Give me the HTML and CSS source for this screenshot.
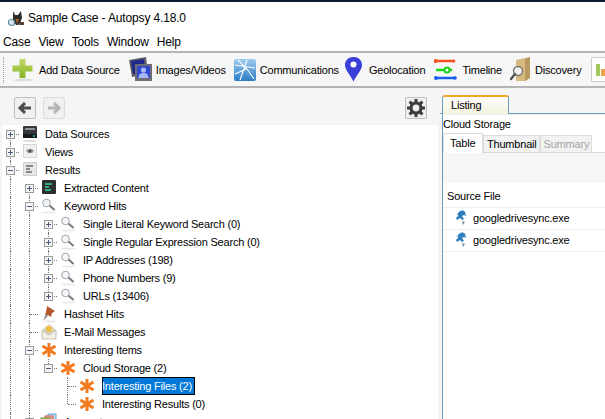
FILE: index.html
```html
<!DOCTYPE html>
<html lang="en">
<head>
    <meta charset="UTF-8">
    <title>Sample Case - Autopsy 4.18.0</title>
    <link rel="stylesheet" href="styles.css">
</head>
<body>
    <svg class="defs" width="0" height="0">
        <symbol id="i-glass" viewBox="0 0 18 18">
            <ellipse cx="9" cy="15.500" rx="7" ry="1" fill="#e9e9e9"/>
            <path d="M9.500 8.500l4.500 4" stroke="#7a7a7a" stroke-width="2" stroke-linecap="round"/>
            <circle cx="6.500" cy="6" r="3.800" fill="#f3f7fa" stroke="#a0a4a8"/>
        </symbol>
        <symbol id="i-star" viewBox="0 0 18 18">
            <path d="M9 2v14M2.500 5l13 8M15.500 5l-13 8" stroke="#f47a20" stroke-width="3"/>
        </symbol>
        <symbol id="i-exe" viewBox="0 0 14 16">
            <path d="M5 2c2-2 5-2 6 0l1 4-2-1-2 1 2 3-2 1-2-2-3 2-1-2 2-2 0-2-2 1z" fill="#2f7fc0"/>
            <path d="M8 11l3 1-2 3z" fill="#7a8fa0"/>
        </symbol>
    </svg>

    <header class="titlebar">
        <svg class="app-logo" width="20" height="20" viewBox="0 0 20 20">
            <path d="M6 3l2 4h3l3-4 1 7-2 5-2 2H9l-3-5z" fill="#2e2a28"/>
            <path d="M8.500 11l1.500 5 2-5z" fill="#a8662c"/>
            <circle cx="4.500" cy="14.500" r="3" fill="#dfeaf0" stroke="#5d8ca8" stroke-width="1.200"/>
            <path d="M13 14h4v3h-5z" fill="#5a4030"/>
        </svg>
        <span>Sample Case - Autopsy 4.18.0</span>
    </header>

    <nav class="menubar">
        <span>Case</span><span>View</span><span>Tools</span><span>Window</span><span>Help</span>
    </nav>

    <div class="toolbar">
        <div class="grip"></div>
        <div class="tool tool-add">
            <svg width="22" height="24" viewBox="0 0 22 24">
                <defs><linearGradient id="g-plus" x1="0" y1="0" x2="0" y2="1"><stop offset="0" stop-color="#c2dc63"/><stop offset="1" stop-color="#86b32b"/></linearGradient></defs>
                <ellipse cx="11" cy="22" rx="10" ry="1.200" fill="#dcdcd6"/>
                <path d="M7.500 1h6v6.500h7v6h-7v6.500h-6v-6.500h-7v-6h7z" fill="url(#g-plus)"/>
            </svg>
            <span>Add Data Source</span>
        </div>
        <div class="tool tool-images">
            <svg width="25" height="25" viewBox="0 0 25 25">
                <path d="M1 3l17-3 2 17-16 3z" fill="#5c5c66"/>
                <path d="M3 4l13-2 1 13-12 2z" fill="#1d2a8c"/>
                <path d="M7 7h17v17H7z" fill="#6c6c72"/>
                <path d="M9 9h13v12H9z" fill="#2f47cc"/>
                <circle cx="15.500" cy="13" r="2.600" fill="#a7b6f4"/>
                <path d="M10.500 21c0-4 2.500-5 5-5s5 1 5 5z" fill="#a7b6f4"/>
            </svg>
            <span>Images/Videos</span>
        </div>
        <div class="tool tool-comm">
            <svg width="22" height="22" viewBox="0 0 22 22">
                <defs><linearGradient id="g-comm" x1="0" y1="0" x2="0" y2="1"><stop offset="0" stop-color="#9fcdf0"/><stop offset="1" stop-color="#2b7cc6"/></linearGradient></defs>
                <rect width="22" height="22" rx="2" fill="url(#g-comm)"/>
                <path d="M1 6l20 3M13 1L6 21M4 1l9 9 7 10M1 15l11-5" stroke="#fff" stroke-width="1.100" fill="none"/>
            </svg>
            <span>Communications</span>
        </div>
        <div class="tool tool-geo">
            <svg width="17" height="25" viewBox="0 0 17 25">
                <path d="M8.500 0C3.500 0 0 3.500 0 8c0 5 5.500 10 8.500 16.500C11.500 18 17 13 17 8c0-4.500-3.500-8-8.500-8z" fill="#3a3fd8"/>
                <circle cx="8.500" cy="7.500" r="3" fill="#fff"/>
            </svg>
            <span>Geolocation</span>
        </div>
        <div class="tool tool-time">
            <svg width="23" height="24" viewBox="0 0 23 24">
                <path d="M1 3h19" stroke="#f4511e" stroke-width="2.500" stroke-linecap="round"/>
                <circle cx="1.500" cy="3" r="2" fill="#f4511e"/><circle cx="19.500" cy="3" r="1.500" fill="#f4511e"/>
                <path d="M2 12h16" stroke="#18d418" stroke-width="2.500"/>
                <circle cx="13" cy="12" r="2.500" fill="#fff" stroke="#18d418" stroke-width="2"/>
                <path d="M2 20h19" stroke="#1a5cf0" stroke-width="2.500" stroke-linecap="round"/>
                <circle cx="2" cy="20" r="2" fill="#1a5cf0"/><circle cx="21" cy="20" r="1.800" fill="#1a5cf0"/>
            </svg>
            <span>Timeline</span>
        </div>
        <div class="tool tool-disc">
            <svg width="21" height="25" viewBox="0 0 21 25">
                <path d="M6 3l14-3v21l-5 3H6z" fill="#d7ba82"/>
                <path d="M15 2l5-2v21l-5 3z" fill="#b99a60"/>
                <circle cx="8" cy="14" r="4.500" fill="#f2f2ee" stroke="#77756e" stroke-width="1.400"/>
                <path d="M5 17l-4 5" stroke="#55534e" stroke-width="2.400" stroke-linecap="round"/>
            </svg>
            <span>Discovery</span>
        </div>
        <div class="tool-chart">
            <svg width="13" height="14" viewBox="0 0 13 14">
                <rect x="1" y="1" width="4" height="12" fill="#a5c85a"/>
                <rect x="6" y="6" width="4" height="7" fill="#eda24a"/>
                <rect x="11" y="8" width="2" height="5" fill="#62b4e0"/>
            </svg>
        </div>
    </div>

    <main class="workspace">
        <section class="left-pane">
            <div class="nav-row">
                <button class="nav-btn"><svg width="16" height="14" viewBox="0 0 16 14"><path d="M14 7H4M8 2L3 7l5 5" fill="none" stroke="#4a4a4a" stroke-width="3"/></svg></button>
                <button class="nav-btn nav-off"><svg width="16" height="14" viewBox="0 0 16 14"><path d="M2 7h10M8 2l5 5-5 5" fill="none" stroke="#b4b4b4" stroke-width="3"/></svg></button>
                <button class="nav-btn nav-gear"><svg width="18" height="18" viewBox="0 0 18 18"><circle cx="9" cy="9" r="5" fill="none" stroke="#3c3c3c" stroke-width="3.200"/><path d="M9 0v4M9 14v4M0 9h4M14 9h4M2.600 2.600l2.800 2.800M12.600 12.600l2.800 2.800M15.400 2.600l-2.800 2.800M5.400 12.600l-2.800 2.800" stroke="#3c3c3c" stroke-width="3"/></svg></button>
            </div>
            <div class="tree">
                <div class="row">
                    <i class="tog plus line-down"></i>
                    <svg class="ico" viewBox="0 0 18 18"><rect x="2" y="1" width="14" height="12" rx="1" fill="#33363a"/><rect x="4" y="3" width="10" height="2" fill="#8d9297"/><rect x="2" y="9" width="14" height="4" fill="#16191c"/><circle cx="13" cy="11" r="1" fill="#31c0d0"/><ellipse cx="9" cy="16" rx="7" ry="1" fill="#ddd"/></svg>
                    <span class="lbl">Data Sources</span>
                </div>
                <div class="row">
                    <i class="tog plus line-both"></i>
                    <svg class="ico" viewBox="0 0 18 18"><rect x="2.500" y="1.500" width="13" height="13" fill="#f1f1f1" stroke="#d6d6d6"/><path d="M5 8c2-3 6-3 8 0-2 3-6 3-8 0z" fill="#9aa09a"/><circle cx="9" cy="8" r="1.500" fill="#3f4a44"/></svg>
                    <span class="lbl">Views</span>
                </div>
                <div class="row">
                    <i class="tog minus line-both"></i>
                    <svg class="ico" viewBox="0 0 18 18"><rect x="2.500" y="1.500" width="13" height="13" fill="#e6e6e6" stroke="#cfcfcf"/><path d="M5 5h7M5 8h4M5 11h6" stroke="#6a6a6a" stroke-width="1.300"/></svg>
                    <span class="lbl">Results</span>
                </div>

                <div class="row">
                    <i class="col line"></i><i class="tog plus line-down"></i>
                    <svg class="ico" viewBox="0 0 18 18"><rect x="2" y="1" width="14" height="14" rx="1" fill="#2d2f30"/><path d="M5 5h7M5 8h4M5 11h6" stroke="#38d69a" stroke-width="1.300"/></svg>
                    <span class="lbl">Extracted Content</span>
                </div>
                <div class="row">
                    <i class="col line"></i><i class="tog minus line-both"></i>
                    <svg class="ico"><use href="#i-glass"/></svg>
                    <span class="lbl">Keyword Hits</span>
                </div>
                <div class="row">
                    <i class="col line"></i><i class="col line"></i><i class="tog plus line-down"></i>
                    <svg class="ico"><use href="#i-glass"/></svg>
                    <span class="lbl">Single Literal Keyword Search (0)</span>
                </div>
                <div class="row">
                    <i class="col line"></i><i class="col line"></i><i class="tog plus line-both"></i>
                    <svg class="ico"><use href="#i-glass"/></svg>
                    <span class="lbl">Single Regular Expression Search (0)</span>
                </div>
                <div class="row">
                    <i class="col line"></i><i class="col line"></i><i class="tog plus line-both"></i>
                    <svg class="ico"><use href="#i-glass"/></svg>
                    <span class="lbl">IP Addresses (198)</span>
                </div>
                <div class="row">
                    <i class="col line"></i><i class="col line"></i><i class="tog plus line-both"></i>
                    <svg class="ico"><use href="#i-glass"/></svg>
                    <span class="lbl">Phone Numbers (9)</span>
                </div>
                <div class="row">
                    <i class="col line"></i><i class="col line"></i><i class="tog plus line-up"></i>
                    <svg class="ico"><use href="#i-glass"/></svg>
                    <span class="lbl">URLs (13406)</span>
                </div>
                <div class="row">
                    <i class="col line"></i><i class="tog leaf line-both"></i>
                    <svg class="ico" viewBox="0 0 18 18"><path d="M7 1l8 5-3 2-1 4-3-2-3 0 1-3z" fill="#b5562c"/><path d="M6 9l-3 7 5-5" fill="#8a8a8a"/><ellipse cx="10" cy="16.500" rx="6" ry="1" fill="#e4e4e4"/></svg>
                    <span class="lbl">Hashset Hits</span>
                </div>
                <div class="row">
                    <i class="col line"></i><i class="tog leaf line-both"></i>
                    <svg class="ico" viewBox="0 0 18 18"><path d="M3 6l6-5 6 5v9H3z" fill="#d8d3c0"/><path d="M2 7l7 5 7-5v9H2z" fill="#f3efe2" stroke="#b9b4a4" stroke-width=".8"/><circle cx="9" cy="6" r="3" fill="#efbe3c"/></svg>
                    <span class="lbl">E-Mail Messages</span>
                </div>
                <div class="row">
                    <i class="col line"></i><i class="tog minus line-both"></i>
                    <svg class="ico"><use href="#i-star"/></svg>
                    <span class="lbl">Interesting Items</span>
                </div>
                <div class="row">
                    <i class="col line"></i><i class="col line"></i><i class="tog minus line-up"></i>
                    <svg class="ico"><use href="#i-star"/></svg>
                    <span class="lbl">Cloud Storage (2)</span>
                </div>
                <div class="row">
                    <i class="col line"></i><i class="col line"></i><i class="col"></i><i class="tog leaf line-both"></i>
                    <svg class="ico"><use href="#i-star"/></svg>
                    <span class="lbl selected">Interesting Files (2)</span>
                </div>
                <div class="row">
                    <i class="col line"></i><i class="col line"></i><i class="col"></i><i class="tog leaf line-up"></i>
                    <svg class="ico"><use href="#i-star"/></svg>
                    <span class="lbl">Interesting Results (0)</span>
                </div>
                <div class="row">
                    <i class="col line"></i><i class="tog plus line-up"></i>
                    <svg class="ico" viewBox="0 0 18 18"><rect x="8" y="1" width="8" height="9" fill="#bfe0f2" stroke="#5aa8d8"/><rect x="5" y="3" width="8" height="9" fill="#f0a8a0" stroke="#d8584c"/><rect x="1" y="5" width="9" height="9" fill="#a6d070" stroke="#5f9e32"/></svg>
                    <span class="lbl">Accounts</span>
                </div>
            </div>
        </section>

        <section class="right-pane">
            <div class="top-tabs">
                <div class="top-tab">Listing</div>
            </div>
            <div class="listing">
                <div class="listing-title">Cloud Storage</div>
                <div class="sub-tabs">
                    <div class="sub-tab active">Table</div>
                    <div class="sub-tab">Thumbnail</div>
                    <div class="sub-tab disabled">Summary</div>
                </div>
                <div class="strip"></div>
                <div class="table-head">Source File</div>
                <div class="table-row"><svg class="exe"><use href="#i-exe"/></svg>googledrivesync.exe</div>
                <div class="table-row"><svg class="exe"><use href="#i-exe"/></svg>googledrivesync.exe</div>
            </div>
        </section>
    </main>
</body>
</html>
```

FILE: styles.css
```css
html, body {
    margin: 0;
    height: 100%;
}
body {
    width: 605px;
    height: 419px;
    overflow: hidden;
    display: flex;
    flex-direction: column;
    font-family: "Liberation Sans", Arial, sans-serif;
    font-size: 11px;
    letter-spacing: -0.2px;
    color: #000;
    background-color: #fff;
    border-top: 2px solid #0b1a2e;
    box-sizing: border-box;
}
.defs {
    position: absolute;
}

/* Title and menu */
.titlebar {
    height: 31px;
    flex: none;
    display: flex;
    align-items: center;
    gap: 1px;
    padding-left: 7px;
    font-size: 12px;
    letter-spacing: -0.15px;
}
.menubar {
    height: 18px;
    flex: none;
    display: flex;
    align-items: center;
    gap: 8px;
    padding-left: 3px;
    font-size: 12px;
    letter-spacing: -0.15px;
}

/* Toolbar */
.toolbar {
    height: 37px;
    flex: none;
    display: flex;
    align-items: center;
    box-sizing: border-box;
    background-color: #f6f6f6;
    border-top: 2px solid #b4b4b4;
    border-bottom: 2px solid #b4b4b4;
    overflow: hidden;
}
.grip {
    width: 0;
    height: 26px;
    margin-left: 3px;
    border-left: 1px dotted #9a9a9a;
}
.tool {
    display: flex;
    align-items: center;
    flex: none;
}
.tool-add { margin-left: 8px; gap: 5px; }
.tool-images { margin-left: 8px; gap: 3px; }
.tool-comm { margin-left: 8px; gap: 4px; }
.tool-geo { margin-left: 6px; gap: 7px; }
.tool-time { margin-left: 9px; gap: 5px; }
.tool-disc { margin-left: 8px; gap: 4px; }
.tool-chart {
    flex: none;
    margin-left: 10px;
    width: 20px;
    height: 25px;
    display: flex;
    align-items: center;
    padding-left: 3px;
    box-sizing: border-box;
    background-color: #fff;
    border: 1px solid #ccc;
}

/* Workspace */
.workspace {
    flex: 1;
    min-height: 0;
    display: flex;
    background-color: #f5f5f5;
}
.left-pane {
    width: 440px;
    flex: none;
    display: flex;
    flex-direction: column;
    padding-left: 2px;
    box-sizing: border-box;
}
.nav-row {
    height: 37px;
    flex: none;
    display: flex;
    align-items: flex-start;
    gap: 7px;
    padding: 9px 0 0 12px;
    box-sizing: border-box;
}
.nav-btn {
    width: 22px;
    height: 22px;
    padding: 0;
    display: flex;
    align-items: center;
    justify-content: center;
    background-color: #f0f0f0;
    border: 1px solid #bdbdbd;
    border-radius: 2px;
}
.nav-off {
    border-color: #dcdcdc;
}
.nav-gear {
    margin-left: 333px;
}

/* Tree */
.tree {
    flex: 1;
    min-height: 0;
    width: 436px;
    overflow: hidden;
    position: relative;
    z-index: 0;
    background-color: #fff;
}
.row {
    height: 18px;
    display: flex;
    align-items: center;
    white-space: nowrap;
}
.col, .tog {
    display: block;
    position: relative;
    flex: none;
    width: 19px;
    height: 18px;
}
.row > :first-child {
    margin-left: -1px;
}
.col.line::before, .tog::before {
    content: "";
    position: absolute;
    z-index: -1;
    left: 9px;
    top: 0;
    bottom: 0;
    border-left: 1px dotted #777;
}
.line-down::before { top: 9px; }
.line-up::before { bottom: 9px; }
.tog::after {
    content: "";
    position: absolute;
    z-index: -1;
    left: 10px;
    width: 8px;
    top: 9px;
    border-top: 1px dotted #777;
}
.plus {
    background-image:
        linear-gradient(#4a5a80, #4a5a80),
        linear-gradient(#4a5a80, #4a5a80),
        linear-gradient(#f4f4f4, #f4f4f4),
        linear-gradient(#9a9a9a, #9a9a9a);
    background-size: 5px 1px, 1px 5px, 7px 7px, 9px 9px;
    background-position: 7px 9px, 9px 7px, 6px 6px, 5px 5px;
    background-repeat: no-repeat;
}
.minus {
    background-image:
        linear-gradient(#4a5a80, #4a5a80),
        linear-gradient(#f4f4f4, #f4f4f4),
        linear-gradient(#9a9a9a, #9a9a9a);
    background-size: 5px 1px, 7px 7px, 9px 9px;
    background-position: 7px 9px, 6px 6px, 5px 5px;
    background-repeat: no-repeat;
}
.ico {
    flex: none;
    width: 18px;
    height: 18px;
    margin-left: 1px;
}
.lbl {
    margin-left: 6px;
    padding-right: 2px;
    line-height: 16px;
    border: 1px solid transparent;
    border-left: none;
}
.selected {
    background-color: #0078d7;
    color: #fff;
    border-color: #000;
    box-shadow: inset 1px 0 #000;
}

/* Listing */
.right-pane {
    flex: 1;
    min-width: 0;
    display: flex;
    flex-direction: column;
    padding-top: 7px;
}
.top-tabs {
    height: 19px;
    flex: none;
    box-sizing: border-box;
    padding-left: 2px;
    border-bottom: 1px solid #6a9cc0;
}
.top-tab {
    width: 67px;
    height: 19px;
    box-sizing: border-box;
    padding: 2px 0 0 8px;
    background: linear-gradient(#fff, #f3f3dc);
    border: 1px solid #6a9cc0;
    border-top: 2px solid #f4a428;
    border-bottom: none;
    border-radius: 3px 3px 0 0;
}
.listing {
    flex: 1;
    margin-left: 2px;
    border-left: 1px solid #6a9cc0;
    border-top: 1px solid #eee;
    background-color: #fff;
}
.listing-title {
    height: 18px;
    line-height: 19px;
}
.sub-tabs {
    height: 20px;
    display: flex;
    align-items: flex-end;
    box-sizing: border-box;
    border-bottom: 1px solid #d8d8d8;
}
.sub-tab {
    height: 17px;
    line-height: 17px;
    padding: 0 2px 0 3px;
    box-sizing: border-box;
    background-color: #f2f2f2;
    border: 1px solid #dcdcdc;
    border-bottom: none;
}
.sub-tab.active {
    width: 40px;
    height: 20px;
    line-height: 18px;
    padding-left: 6px;
    background-color: #fff;
    margin-bottom: -1px;
}
.sub-tab.disabled {
    color: #a6a6a6;
}
.strip {
    height: 30px;
    background-color: #f6f6f6;
}
.table-head, .table-row {
    display: flex;
    align-items: center;
    border-bottom: 1px solid #eee;
    box-sizing: border-box;
    white-space: nowrap;
}
.table-head {
    height: 25px;
    padding: 1px 0 0 4px;
}
.table-row {
    height: 22px;
    padding: 0 0 2px 11px;
}
.exe {
    width: 14px;
    height: 16px;
    margin-right: 5px;
    flex: none;
}
```
